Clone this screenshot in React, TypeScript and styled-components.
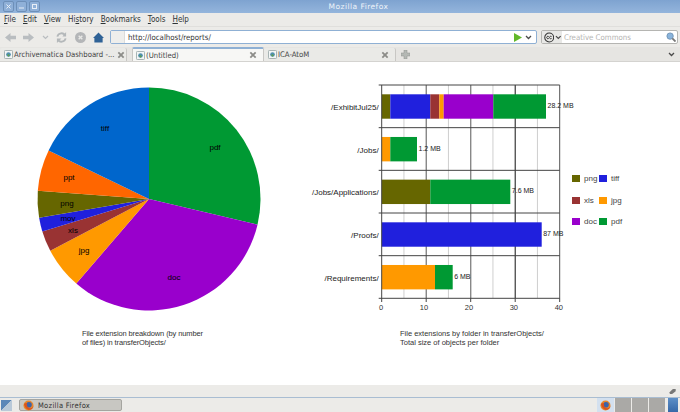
import React, { FC } from "react";
import styled, { createGlobalStyle } from "styled-components";

const GlobalStyle = createGlobalStyle`
  html, body { margin: 0; padding: 0; background: #fff; }
  #root { width: 680px; height: 412px; overflow: hidden; }
`;

const COLORS: any = {
  png: "#666600",
  tiff: "#2020dd",
  mov: "#2020dd",
  xls: "#993333",
  jpg: "#ff9900",
  doc: "#9900cc",
  pdf: "#009933",
  ppt: "#ff6600",
  tiffPie: "#0066cc",
};

const CX = 149;
const CY = 119;
const R = 111.5;

const slices = [
  { name: "pdf", color: COLORS.pdf, from: 0, to: 103.3, lx: 215, ly: 70 },
  { name: "doc", color: COLORS.doc, from: 103.3, to: 220.7, lx: 174, ly: 200 },
  { name: "jpg", color: COLORS.jpg, from: 220.7, to: 242.3, lx: 84, ly: 173 },
  { name: "xls", color: COLORS.xls, from: 242.3, to: 253.1, lx: 73, ly: 153 },
  { name: "mov", color: COLORS.mov, from: 253.1, to: 260.3, lx: 68, ly: 141 },
  { name: "png", color: COLORS.png, from: 260.3, to: 274.3, lx: 67, ly: 126 },
  { name: "ppt", color: COLORS.ppt, from: 274.3, to: 295.8, lx: 69, ly: 100 },
  { name: "tiff", color: COLORS.tiffPie, from: 295.8, to: 360, lx: 105, ly: 51 },
];

const point = (deg: number) => {
  const rad = (deg * Math.PI) / 180;
  return [CX + R * Math.sin(rad), CY - R * Math.cos(rad)];
};

const slicePath = (from: number, to: number) => {
  const [x1, y1] = point(from);
  const [x2, y2] = point(to);
  const large = to - from > 180 ? 1 : 0;
  return `M${CX} ${CY}L${x1} ${y1}A${R} ${R} 0 ${large} 1 ${x2} ${y2}Z`;
};

// bar chart pixel values, measured from the axis origin
const ORIGIN = 76.7;
const UNIT = 4.45;
const TOP = 23;
const ROW = 42.67;

const rows = [
  {
    label: "/ExhibitJul25/",
    size: "28.2 MB",
    segs: [
      ["png", 8.6],
      ["tiff", 40],
      ["xls", 9],
      ["jpg", 4.4],
      ["doc", 49.6],
      ["pdf", 52.7],
    ],
  },
  { label: "/Jobs/", size: "1.2 MB", segs: [["jpg", 8.6], ["pdf", 26.7]] },
  { label: "/Jobs/Applications/", size: "7.6 MB", segs: [["png", 48.6], ["pdf", 80]] },
  { label: "/Proofs/", size: "87 MB", segs: [["tiff", 160]] },
  { label: "/Requirements/", size: "6 MB", segs: [["jpg", 53.3], ["pdf", 17.7]] },
];

const gridLines = [
  [5, "#cfcfcf", 1],
  [10, "#555", 1],
  [15, "#cfcfcf", 1],
  [20, "#888", 1.4],
  [25, "#cfcfcf", 1],
  [30, "#111", 1],
  [35, "#cfcfcf", 1],
  [40, "#555", 1],
];

const legend = ["png", "tiff", "xls", "jpg", "doc", "pdf"];

const Globe: FC = () => (
  <svg width="9" height="9" viewBox="0 0 10 10">
    <rect x="0.5" y="0.5" width="9" height="9" rx="1" fill="#f4f6f6" stroke="#9aa8a8" />
    <circle cx="5" cy="5" r="2.6" fill="#4f8fae" />
    <path d="M3.5 5.5q1.5-2 3 .6L5 7.5z" fill="#5f9e4e" />
  </svg>
);

const CloseX: FC = () => (
  <svg width="8" height="8" viewBox="0 0 9 9">
    <path d="M1.5 1.5l6 6M7.5 1.5l-6 6" stroke="#8c8c88" strokeWidth="2" />
  </svg>
);

const Chevron: FC = () => (
  <svg width="7" height="5" viewBox="0 0 7 5">
    <path d="M1 1l2.5 2.5L6 1" fill="none" stroke="#4a4a4a" strokeWidth="1.3" />
  </svg>
);

const FoxIcon: FC = () => (
  <svg width="11" height="11" viewBox="0 0 11 11">
    <circle cx="5.5" cy="5.5" r="5" fill="#e8872a" />
    <circle cx="6" cy="4.8" r="2.8" fill="#3d63a8" />
    <path d="M1 4q1 5 5 6 4-.5 4.5-4-1.5 3-4.5 2Q3.5 7 4 3 2 3 1 4z" fill="#d9541e" />
  </svg>
);

const App: FC = () => {
  return (
    <Screen>
      <GlobalStyle />
      <TitleBar>
        <WindowButtons>
          <WindowButton>
            <svg width="5" height="5" viewBox="0 0 5 5">
              <path d="M.5.5l4 4M4.5.5l-4 4" stroke="#e8eef6" strokeWidth="1" />
            </svg>
          </WindowButton>
          <WindowButton>
            <svg width="5" height="5" viewBox="0 0 5 5">
              <path d="M0 4h5" stroke="#e8eef6" strokeWidth="1" />
            </svg>
          </WindowButton>
          <WindowButton>
            <svg width="5" height="5" viewBox="0 0 5 5">
              <rect x=".5" y=".5" width="4" height="4" fill="none" stroke="#e8eef6" />
            </svg>
          </WindowButton>
        </WindowButtons>
        <WindowTitle>Mozilla Firefox</WindowTitle>
      </TitleBar>

      <MenuBar>
        <MenuItem><u>F</u>ile</MenuItem>
        <MenuItem><u>E</u>dit</MenuItem>
        <MenuItem><u>V</u>iew</MenuItem>
        <MenuItem>Hi<u>s</u>tory</MenuItem>
        <MenuItem><u>B</u>ookmarks</MenuItem>
        <MenuItem><u>T</u>ools</MenuItem>
        <MenuItem><u>H</u>elp</MenuItem>
      </MenuBar>

      <NavBar>
        <NavIcons>
          <svg width="11" height="11" viewBox="0 0 12 12">
            <path d="M0 6l6-5v3h6v4H6v3z" fill="#b9bdc0" />
          </svg>
          <svg width="11" height="11" viewBox="0 0 12 12">
            <path d="M12 6L6 1v3H0v4h6v3z" fill="#b9bdc0" />
          </svg>
          <svg width="7" height="5" viewBox="0 0 7 5">
            <path d="M1 1l2.5 2.5L6 1" fill="none" stroke="#b9bdc0" strokeWidth="1.2" />
          </svg>
          <svg width="11" height="11" viewBox="0 0 12 12">
            <path d="M1.5 5A4.5 4.5 0 0 1 10 4M10.5 7A4.5 4.5 0 0 1 2 8" fill="none" stroke="#b4b8ba" strokeWidth="2" />
            <path d="M11 0v5H7zM1 12V7h5z" fill="#b4b8ba" />
          </svg>
          <svg width="11" height="11" viewBox="0 0 12 12">
            <circle cx="6" cy="6" r="6" fill="#b4b6b8" />
            <path d="M4 4l4 4M8 4l-4 4" stroke="#e8e8e6" strokeWidth="1.5" />
          </svg>
          <svg width="11" height="11" viewBox="0 0 12 12">
            <path d="M6 .5L12 6.5h-1.5V11.5h-9V6.5H0z" fill="#2f6296" />
          </svg>
        </NavIcons>
        <UrlBox>
          <UrlFavicon />
          <UrlText>http://localhost/reports/</UrlText>
          <svg width="8" height="9" viewBox="0 0 8 9">
            <path d="M0 0l8 4.5L0 9z" fill="#62b82a" />
          </svg>
          <Chevron />
        </UrlBox>
        <SearchBox>
          <SearchEngine>
            <svg width="11" height="11" viewBox="0 0 11 11">
              <circle cx="5.5" cy="5.5" r="4.7" fill="#e6e6e4" stroke="#333" strokeWidth="1.1" />
              <path d="M5 4.5a1.3 1.3 0 1 0 0 2M8 4.5a1.3 1.3 0 1 0 0 2" fill="none" stroke="#333" />
            </svg>
            <Chevron />
          </SearchEngine>
          <SearchText>Creative Commons</SearchText>
          <svg width="10" height="10" viewBox="0 0 11 11">
            <circle cx="4.5" cy="4.5" r="3.5" fill="#8ab4dc" stroke="#6f93b5" />
            <path d="M7 7l3.5 3.5" stroke="#777" strokeWidth="2" />
          </svg>
        </SearchBox>
      </NavBar>

      <TabBar>
        <Tab $width={127} $after={5} $end={1}>
          <Globe />
          <TabLabel>Archivematica Dashboard -...</TabLabel>
          <CloseX />
        </Tab>
        <Tab $width={132} $end={6} $active>
          <Globe />
          <TabLabel>(Untitled)</TabLabel>
          <CloseX />
        </Tab>
        <Tab $width={132} $end={6}>
          <Globe />
          <TabLabel>ICA-AtoM</TabLabel>
          <CloseX />
        </Tab>
        <NewTab>
          <svg width="9" height="9" viewBox="0 0 9 9">
            <path d="M3 0h3v3h3v3H6v3H3V6H0V3h3z" fill="#b4b8b4" stroke="#8f938f" strokeWidth=".5" />
          </svg>
        </NewTab>
        <TabListButton>
          <Chevron />
        </TabListButton>
      </TabBar>

      <Content>
        <PieFigure>
          <svg width="270" height="240" viewBox="0 0 270 240">
            {slices.map((s) => (
              <path key={s.name} d={slicePath(s.from, s.to)} fill={s.color} />
            ))}
            {slices.map((s) => (
              <ChartLabel key={s.name} x={s.lx} y={s.ly} textAnchor="middle">
                {s.name}
              </ChartLabel>
            ))}
          </svg>
          <PieCaption>
            File extension breakdown (by number
            <br />
            of files) in transferObjects/
          </PieCaption>
        </PieFigure>

        <BarFigure>
          <BarRow>
            <svg width="270" height="240" viewBox="0 0 270 240">
              {gridLines.map(([v, c, w]) => {
                const gx = ORIGIN + (v as number) * UNIT;
                return <line key={v} x1={gx} x2={gx} y1={TOP} y2={236} stroke={c as string} strokeWidth={w as number} />;
              })}
              {rows.map((row, i) => {
                let x = ORIGIN;
                const y = TOP + i * ROW;
                return (
                  <g key={row.label}>
                    <line x1={ORIGIN - 3} x2={ORIGIN + 178} y1={y} y2={y} stroke="#444" />
                    <ChartLabel x={ORIGIN - 3} y={y + 25} textAnchor="end" fill="#222">
                      {row.label}
                    </ChartLabel>
                    {row.segs.map(([name, w], j) => {
                      const rect = (
                        <rect key={j} x={x} y={y + 9.3} width={w as number} height={24.4} fill={COLORS[name]} />
                      );
                      x += w as number;
                      return rect;
                    })}
                    <SizeLabel x={x + 1.5} y={y + 23} fill="#222">
                      {row.size}
                    </SizeLabel>
                  </g>
                );
              })}
              <line x1={ORIGIN - 3} x2={ORIGIN + 178} y1={236.3} y2={236.3} stroke="#444" />
              {[0, 10, 20, 30, 40].map((v) => (
                <line key={v} x1={ORIGIN + v * UNIT} x2={ORIGIN + v * UNIT} y1={236} y2={240} stroke="#444" />
              ))}
              <line x1={ORIGIN} x2={ORIGIN} y1={TOP} y2={236} stroke="#444" />
            </svg>
            <Legend>
              {legend.map((name) => (
                <LegendItem key={name}>
                  <Swatch $color={COLORS[name]} />
                  {name}
                </LegendItem>
              ))}
            </Legend>
          </BarRow>
          <AxisLabels>
            {[0, 10, 20, 30, 40].map((v) => (
              <AxisLabel key={v}>{v}</AxisLabel>
            ))}
          </AxisLabels>
          <BarCaption>
            File extensions by folder in transferObjects/
            <br />
            Total size of objects per folder
          </BarCaption>
        </BarFigure>
      </Content>

      <StatusBar>
        <svg width="7" height="5" viewBox="0 0 9 7">
          <path d="M0 5l5-5h4v3L4 7H1z" fill="#777" />
        </svg>
      </StatusBar>

      <TaskBar>
        <ShowDesktop />
        <TaskButton>
          <FoxIcon />
          Mozilla Firefox
        </TaskButton>
        <Tray>
          <TrayActive>
            <FoxIcon />
          </TrayActive>
          <TrayCell />
          <TrayCell />
          <TrayCell />
          <TrayEnd />
        </Tray>
      </TaskBar>
    </Screen>
  );
};

const Screen = styled("div")`
  display: flex;
  flex-direction: column;
  width: 680px;
  height: 412px;
  overflow: hidden;
  background: #fff;
  font-family: "DejaVu Sans", sans-serif;
  font-stretch: condensed;
  color: #333;
`;

const TitleBar = styled("div")`
  display: flex;
  align-items: center;
  height: 13px;
  padding: 0 3px;
  box-sizing: border-box;
  background: linear-gradient(#7ea3d0, #94b5dc);
`;
const WindowButtons = styled("div")`
  display: flex;
  gap: 2px;
`;
const WindowButton = styled("div")`
  display: flex;
  align-items: center;
  justify-content: center;
  width: 9px;
  height: 9px;
  border: 1px solid #6d8fb8;
  border-radius: 2px;
  background: #8fb0d8;
`;
const WindowTitle = styled("div")`
  flex: 1;
  text-align: center;
  font-size: 7.5px;
  font-stretch: normal;
  letter-spacing: 0.45px;
  color: #eef3f9;
`;

const MenuBar = styled("div")`
  display: flex;
  align-items: center;
  gap: 7px;
  height: 13px;
  padding: 0 4px;
  background: #ecebe8;
`;
const MenuItem = styled("span")`
  font-size: 8px;
  color: #2e3436;
`;

const NavBar = styled("div")`
  display: flex;
  align-items: center;
  height: 21px;
  padding: 0 2px 0 5px;
  box-sizing: border-box;
  background: #ecebe8;
  border-top: 1px solid #e0dfdc;
`;
const NavIcons = styled("div")`
  display: flex;
  align-items: center;
  justify-content: space-between;
  width: 99px;
  margin-right: 6px;
`;
const UrlBox = styled("div")`
  display: flex;
  align-items: center;
  gap: 3px;
  width: 427px;
  height: 14px;
  padding-right: 4px;
  box-sizing: border-box;
  background: #fff;
  border: 1px solid #8fb0d4;
  border-radius: 2px;
`;
const UrlFavicon = styled("div")`
  width: 13px;
  height: 12px;
  background: #eeeeec;
  border-right: 1px solid #dcdcda;
`;
const UrlText = styled("span")`
  flex: 1;
  font-size: 7.8px;
  color: #333;
`;
const SearchBox = styled("div")`
  display: flex;
  align-items: center;
  width: 137px;
  height: 14px;
  margin-left: 4px;
  padding-right: 1px;
  box-sizing: border-box;
  background: #fff;
  border: 1px solid #b5b5b2;
  border-radius: 2px;
`;
const SearchEngine = styled("div")`
  display: flex;
  align-items: center;
  gap: 1px;
  width: 20px;
  height: 12px;
  padding-left: 2px;
  box-sizing: border-box;
  background: #e8e8e6;
`;
const SearchText = styled("span")`
  flex: 1;
  padding-left: 2px;
  font-size: 7.8px;
  color: #b4b4b2;
`;

const TabBar = styled("div")`
  display: flex;
  align-items: flex-end;
  height: 15px;
  box-sizing: border-box;
  background: #e6e5e2;
  border-bottom: 1px solid #d4d3d0;
`;
const Tab = styled("div")<{ $width: number; $end: number; $after?: number; $active?: boolean }>`
  display: flex;
  align-items: center;
  gap: 1px;
  width: ${(p) => p.$width}px;
  height: ${(p) => (p.$active ? 14 : 13)}px;
  padding: 0 ${(p) => p.$end}px 0 ${(p) => (p.$active ? 3 : 4)}px;
  margin-right: ${(p) => p.$after || 0}px;
  box-sizing: border-box;
  background: ${(p) => (p.$active ? "#f7f7f5" : "#eaeae7")};
  border-right: 1px solid #c8c7c4;
  border-left: ${(p) => (p.$active ? "1px solid #c8c7c4" : "none")};
  border-top: ${(p) => (p.$active ? "2px solid #8fb0d4" : "none")};
  border-radius: 2px 2px 0 0;
`;
const TabLabel = styled("span")`
  flex: 1;
  font-size: 7.7px;
  white-space: nowrap;
  color: #444;
`;
const NewTab = styled("div")`
  display: flex;
  align-items: center;
  justify-content: center;
  width: 14px;
  height: 13px;
  margin-left: 2px;
`;
const TabListButton = styled("div")`
  display: flex;
  align-items: center;
  justify-content: flex-end;
  flex: 1;
  height: 13px;
  padding-right: 5px;
`;

const Content = styled("div")`
  display: flex;
  flex: 1;
  min-height: 0;
  background: #fff;
`;
const PieFigure = styled("div")`
  width: 305px;
  padding-top: 18px;
  flex-shrink: 0;
  svg {
    display: block;
  }
`;
const PieCaption = styled("div")`
  margin: 9px 0 0 82px;
  font-family: "Liberation Sans", sans-serif;
  font-stretch: normal;
  font-size: 7.5px;
  line-height: 9px;
  letter-spacing: -0.12px;
  white-space: nowrap;
  color: #333;
`;
const BarFigure = styled("div")`
  flex: 1;
`;
const BarRow = styled("div")`
  display: flex;
  svg {
    display: block;
    flex-shrink: 0;
  }
`;
const Legend = styled("div")`
  display: grid;
  grid-template-columns: 27px 27px;
  grid-auto-rows: 21.5px;
  align-content: start;
  margin: 106px 0 0 -3px;
`;
const LegendItem = styled("div")`
  display: flex;
  align-items: center;
  gap: 4px;
  font-family: "Liberation Sans", sans-serif;
  font-stretch: normal;
  font-size: 8px;
  color: #444;
`;
const Swatch = styled("span")<{ $color: string }>`
  width: 8px;
  height: 7px;
  background: ${(p) => p.$color};
`;
const AxisLabels = styled("div")`
  display: flex;
  justify-content: space-between;
  width: 184px;
  margin: 1px 0 0 74px;
`;
const AxisLabel = styled("span")`
  font-family: "Liberation Sans", sans-serif;
  font-stretch: normal;
  font-size: 7.5px;
  color: #333;
`;
const BarCaption = styled("div")`
  margin: 17px 0 0 95px;
  font-family: "Liberation Sans", sans-serif;
  font-stretch: normal;
  font-size: 7.5px;
  line-height: 9px;
  white-space: nowrap;
  color: #333;
`;
const ChartLabel = styled("text")`
  font-family: "Liberation Sans", sans-serif;
  font-stretch: normal;
  font-size: 8px;
`;
const SizeLabel = styled(ChartLabel)`
  font-size: 7px;
`;

const StatusBar = styled("div")`
  display: flex;
  align-items: center;
  justify-content: flex-end;
  height: 12px;
  padding-right: 4px;
  background: #ecebe8;
`;

const TaskBar = styled("div")`
  display: flex;
  align-items: center;
  height: 15px;
  padding-right: 2px;
  box-sizing: border-box;
  background: #ecebe8;
  border-top: 1px solid #a9bdd2;
`;
const ShowDesktop = styled("div")`
  width: 11px;
  height: 11px;
  margin: 0 7px 0 1px;
  background: linear-gradient(135deg, #5b87b8 50%, #b9c9d8 50%);
`;
const TaskButton = styled("div")`
  display: flex;
  align-items: center;
  gap: 4px;
  width: 103px;
  height: 12px;
  padding-left: 3px;
  box-sizing: border-box;
  background: #c8c7c2;
  border: 1px solid #a5a5a0;
  border-radius: 2px;
  font-size: 7.5px;
  letter-spacing: 0.3px;
  color: #333;
`;
const Tray = styled("div")`
  display: flex;
  align-items: center;
  gap: 1px;
  margin-left: auto;
`;
const TrayActive = styled("div")`
  display: flex;
  align-items: center;
  justify-content: center;
  width: 17px;
  height: 14px;
  background: #d3e0ef;
`;
const TrayCell = styled("div")`
  width: 16px;
  height: 14px;
  background: #aaa9a6;
`;
const TrayEnd = styled("div")`
  width: 10px;
  height: 14px;
  margin-left: 2px;
  background: linear-gradient(#5d8fc7, #3668a8);
`;

export default App;
